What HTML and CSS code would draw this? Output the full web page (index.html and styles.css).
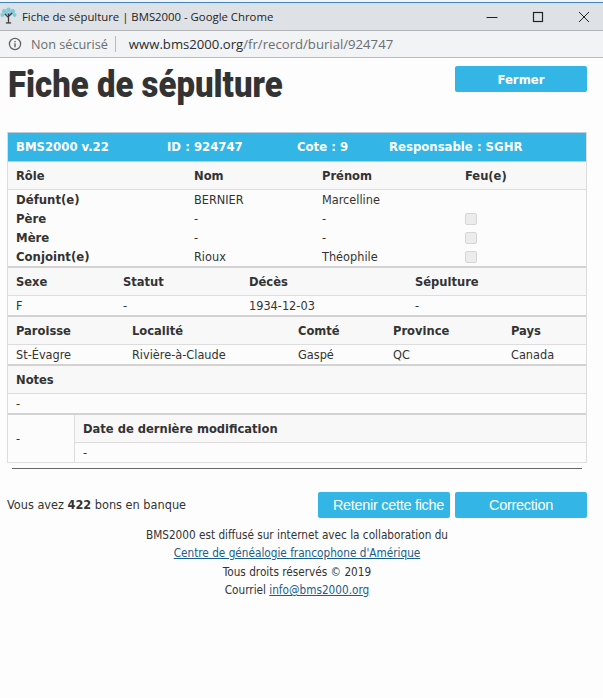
FILE: index.html
```html
<!DOCTYPE html>
<html lang="fr">
<head>
<meta charset="utf-8" />
<title>Fiche de sépulture | BMS2000</title>
<link rel="stylesheet" href="styles.css">
</head>
<body>

<!-- fenetre chrome -->
<div class="top-strip"></div>
<div class="title-bar">
    <svg class="favicon" width="17" height="17" viewBox="0 0 16 16">
        <g fill="#7fcbdc">
            <circle cx="4" cy="4" r="2.2"/><circle cx="8" cy="2.6" r="2.2"/><circle cx="12" cy="4" r="2.2"/>
            <circle cx="2.2" cy="7.5" r="1.8"/><circle cx="13.8" cy="7.5" r="1.8"/><circle cx="6" cy="6" r="2"/><circle cx="10" cy="6" r="2"/>
        </g>
        <path d="M8 15V6M8 10L4.5 6.5M8 9l3.5-3.5" stroke="#3b3b3b" stroke-width="1.2" fill="none"/>
        <path d="M5.5 15h5" stroke="#3b3b3b" stroke-width="1.2"/>
    </svg>
    <span class="window-title">Fiche de sépulture | BMS2000 - Google Chrome</span>
    <div class="window-ctrl">
        <svg width="12" height="12" viewBox="0 0 12 12"><path d="M0.5 6.5h11" stroke="#222" fill="none"/></svg>
        <svg width="12" height="12" viewBox="0 0 12 12"><rect x="1.5" y="1.5" width="9" height="9" stroke="#222" stroke-width="1.2" fill="none"/></svg>
        <svg width="12" height="12" viewBox="0 0 12 12"><path d="M1 1l10 10M11 1L1 11" stroke="#222" fill="none"/></svg>
    </div>
</div>
<div class="address-bar">
    <svg width="14" height="14" viewBox="0 0 14 14">
        <circle cx="7" cy="7" r="5.6" stroke="#5f6368" stroke-width="1.3" fill="none"/>
        <path d="M7 6.2v4M7 3.9v1.3" stroke="#5f6368" stroke-width="1.4" fill="none"/>
    </svg>
    <span class="not-secure">Non sécurisé</span>
    <span class="url"><span class="host">www.bms2000.org</span>/fr/record/burial/924747</span>
</div>

<div class="page">
    <div class="head">
        <h1>Fiche de sépulture</h1>
        <a class="btn btn-close" href="#">Fermer</a>
    </div>

    <div class="panel">
        <div class="panel-head">
            <span class="ph-version">BMS2000 v.22</span>
            <span class="ph-id">ID : 924747</span>
            <span class="ph-cote">Cote : 9</span>
            <span>Responsable : SGHR</span>
        </div>

        <div class="grid grid-people grid-label">
            <span>Rôle</span><span>Nom</span><span>Prénom</span><span>Feu(e)</span>
        </div>
        <div class="people">
            <div class="grid grid-people person"><b>Défunt(e)</b><span>BERNIER</span><span>Marcelline</span><span></span></div>
            <div class="grid grid-people person"><b>Père</b><span>-</span><span>-</span><span><input type="checkbox" disabled></span></div>
            <div class="grid grid-people person"><b>Mère</b><span>-</span><span>-</span><span><input type="checkbox" disabled></span></div>
            <div class="grid grid-people person"><b>Conjoint(e)</b><span>Rioux</span><span>Théophile</span><span><input type="checkbox" disabled></span></div>
        </div>

        <div class="grid grid-burial grid-label thick">
            <span>Sexe</span><span>Statut</span><span>Décès</span><span>Sépulture</span>
        </div>
        <div class="grid grid-burial grid-value">
            <span>F</span><span>-</span><span>1934-12-03</span><span>-</span>
        </div>

        <div class="grid grid-place grid-label thick">
            <span>Paroisse</span><span>Localité</span><span>Comté</span><span>Province</span><span>Pays</span>
        </div>
        <div class="grid grid-place grid-value">
            <span>St-Évagre</span><span>Rivière-à-Claude</span><span>Gaspé</span><span>QC</span><span>Canada</span>
        </div>

        <div class="grid grid-label thick"><span>Notes</span></div>
        <div class="grid grid-value"><span>-</span></div>

        <div class="last thick">
            <div class="last-side">-</div>
            <div class="last-main">
                <div class="grid grid-label"><span>Date de dernière modification</span></div>
                <div class="grid grid-value"><span>-</span></div>
            </div>
        </div>
    </div>

    <hr>

    <div class="actions">
        <span class="credits">Vous avez <b>422</b> bons en banque</span>
        <div class="action-btns">
            <a class="btn btn-light btn-keep" href="#">Retenir cette fiche</a>
            <a class="btn btn-light" href="#">Correction</a>
        </div>
    </div>

    <div class="foot">
        BMS2000 est diffusé sur internet avec la collaboration du<br>
        <a href="#">Centre de généalogie francophone d'Amérique</a><br>
        Tous droits réservés © 2019<br>
        Courriel <a href="#">info@bms2000.org</a>
    </div>
</div>

</body>
</html>
```
FILE: styles.css
```css
html,body{margin:0;padding:0;height:100%;}
body{background:#fdfdfd;color:#333;font-family:"DejaVu Sans",sans-serif;font-stretch:condensed;font-size:12.6px;overflow:hidden;}

.top-strip{height:2px;background:#f4f4f4;border-bottom:1px solid #3f86c6;}
.title-bar{height:27px;background:#dee1e6;border-bottom:1px solid #b4b6ba;display:flex;align-items:center;}
.favicon{flex:none;margin-top:-2px;}
.window-title{margin-left:5px;font-family:"Open Sans",sans-serif;font-stretch:normal;font-size:11.35px;color:#222;white-space:nowrap;}
.window-ctrl{margin-left:auto;display:flex;gap:34px;padding-right:13px;}
.address-bar{height:26px;background:#f1f3f4;border-bottom:1px solid #b9babc;display:flex;align-items:center;padding-left:8px;font-family:"Open Sans",sans-serif;font-stretch:normal;font-size:13.15px;color:#6a6d71;}
.not-secure{margin-left:9px;padding-right:7px;margin-right:13px;border-right:1px solid #b9babc;font-size:12.7px;line-height:16px;}
.host{color:#2c2c2c;}

.page{padding:0 16px 0 7px;}
.head{display:flex;justify-content:space-between;height:74px;}
h1{margin:5px 0 0 1px;font-family:"Roboto",sans-serif;font-stretch:normal;font-weight:900;font-size:37px;line-height:44px;color:#333;transform:scaleX(.89);transform-origin:left center;white-space:nowrap;}
.btn{display:block;width:132px;height:26px;line-height:26px;box-sizing:border-box;background:#33b5e5;border-radius:2px;color:#fff;text-align:center;text-decoration:none;}
.btn-close{margin-top:8px;font-weight:700;font-size:13px;line-height:27px;}
.btn-light{font-family:"Liberation Sans",sans-serif;font-stretch:normal;font-size:14.5px;letter-spacing:-.3px;}
.btn-keep{text-indent:9px;white-space:nowrap;}

.panel{width:580px;box-sizing:border-box;border:1px solid #ddd;border-top-color:#bcd;background:#fcfcfc;}
.panel-head{height:28px;background:#33b5e5;color:#fff;font-weight:700;font-size:13px;line-height:27px;padding-left:8px;display:flex;border-bottom:1px solid #c9c9c9;}
.ph-version{width:151px;}
.ph-id{width:130px;}
.ph-cote{width:92px;}

.grid{display:grid;padding-left:8px;}
.grid-people{grid-template-columns:178px 128px 143px 1fr;}
.grid-burial{grid-template-columns:107px 126px 166px 1fr;}
.grid-place{grid-template-columns:116px 166px 95px 118px 1fr;}
.grid-label{height:27px;line-height:27px;font-weight:700;font-size:12.8px;background:#f8f8f8;border-bottom:1px solid #ddd;}
.grid-value{height:19px;line-height:20px;}
.thick{border-top:2px solid #d2d2d2;}

.person{height:19px;line-height:20px;}
.person b{font-size:13px;line-height:19px;}
input[type=checkbox]{appearance:none;display:block;margin:4px 0 0;width:12px;height:12px;background:#ececec;border:1px solid #d6d6d6;border-radius:2px;box-sizing:border-box;}

.last{display:flex;height:47px;}
.last-side{width:58px;padding-left:8px;line-height:47px;border-right:1px solid #ddd;flex:none;}
.last-main{flex:1;}

hr{margin:5px 5px 0 5px;width:570px;border:0;border-top:1px solid #666;}

.actions{display:flex;justify-content:space-between;align-items:center;width:580px;margin-top:23px;}
.credits{margin-top:-2px;}
.action-btns{display:flex;gap:5px;}
.foot{width:580px;margin-top:8px;text-align:center;font-size:11.7px;line-height:18.4px;}
.foot a{color:#1a5e8a;text-decoration:underline;}
```
